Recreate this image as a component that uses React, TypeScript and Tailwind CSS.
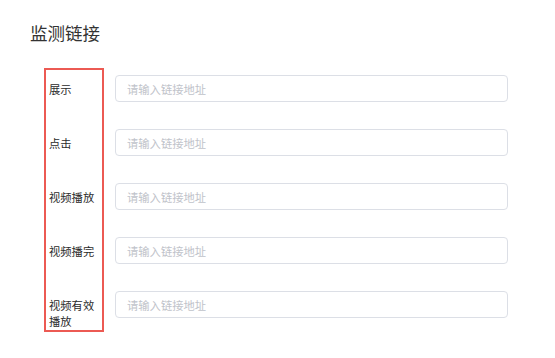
const fields = ["展示", "点击", "视频播放", "视频播完", "视频有效播放"];

export default function App() {
  return (
    <div
      className="w-[555px] h-[358px] bg-white pl-[30px] pt-[21px] text-[#333]"
      style={{ fontFamily: '"Noto Sans CJK SC", "Noto Sans", sans-serif' }}
    >
      <h1 className="text-[17.5px] leading-[24px] font-normal text-[#333]">监测链接</h1>

      <div className="mt-[23px] flex">
        {/* label column */}
        <div className="ml-[14px] w-[59.5px] border-2 border-[#ec5a53] pl-[3px] pt-[5px] pb-[1.5px]">
          {fields.map((label, i) => (
            <div
              key={label}
              className={`min-h-[27px] pt-[5.5px] text-[11.3px] leading-[16px] text-[#2b2b2b] ${i < fields.length - 1 ? "mb-[27px]" : ""}`}
            >
              {label}
            </div>
          ))}
        </div>

        {/* inputs */}
        <div className="ml-[11.5px] w-[393px] flex flex-col gap-[27px] pt-[7px]">
          {fields.map((label) => (
            <input
              key={label}
              type="text"
              placeholder="请输入链接地址"
              className="h-[27px] w-full rounded-[4px] border border-[#dcdfe6] px-[11px] text-[11.3px] text-[#333] placeholder:text-[#bfc3ca] outline-none"
            />
          ))}
        </div>
      </div>
    </div>
  );
}
